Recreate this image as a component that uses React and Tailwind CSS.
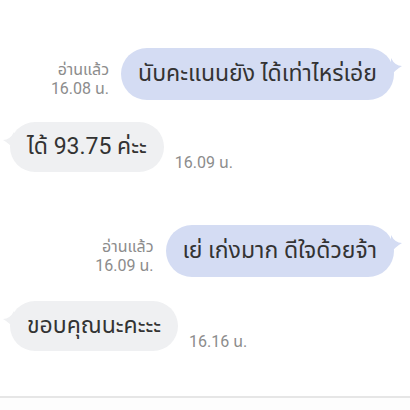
function SentTail() {
  return (
    <svg className="absolute -right-[9px] top-[10px]" width="12" height="18" viewBox="0 0 12 18">
      <path d="M0 0 Q4 8 11 8 Q4 12 0 18 Z" fill="#d4dcf3" />
    </svg>
  )
}

function RecvTail() {
  return (
    <svg className="absolute -left-[8px] top-[10px]" width="12" height="18" viewBox="0 0 12 18">
      <path d="M12 0 Q8 8 1 8 Q8 12 12 18 Z" fill="#eff0f2" />
    </svg>
  )
}

function Sent({ text, time }) {
  return (
    <div className="flex items-end justify-end pr-[16px]">
      <div className="mr-[12px] mb-[2px] flex flex-col items-end text-[#8c8c8c] leading-[19px]">
        <span className="text-[16px]">อ่านแล้ว</span>
        <span className="text-[16px]">{time}</span>
      </div>
      <div className="relative rounded-[26px] bg-[#d4dcf3] px-[17px] py-[11px] text-[23px] leading-[30px] text-[#333]">
        {text}
        <SentTail />
      </div>
    </div>
  )
}

function Received({ text, time }) {
  return (
    <div className="flex items-end pl-[10px]">
      <div className="relative rounded-[26px] bg-[#eff0f2] px-[17px] py-[10px] text-[23px] leading-[30px] text-[#333]">
        {text}
        <RecvTail />
      </div>
      <span className="ml-[11px] text-[16px] leading-[19px] text-[#8c8c8c]">{time}</span>
    </div>
  )
}

export default function App() {
  return (
    <div className="h-[410px] w-[410px] overflow-hidden bg-white font-[Roboto,'Noto_Sans_Thai',sans-serif]">
      <div className="flex h-[396px] flex-col pt-[48px]">
        <Sent text="นับคะแนนยัง ได้เท่าไหร่เอ่ย" time="16.08 น." />
        <div className="mt-[22px]">
          <Received text="ได้ 93.75 ค่ะะ" time="16.09 น." />
        </div>
        <div className="mt-[53px]">
          <Sent text="เย่ เก่งมาก ดีใจด้วยจ้า" time="16.09 น." />
        </div>
        <div className="mt-[24px]">
          <Received text="ขอบคุณนะคะะะ" time="16.16 น." />
        </div>
      </div>
      <div className="h-[2px] bg-[#e6e6e6]" />
      <div className="h-[12px] bg-[#fdfdfd]" />
    </div>
  )
}
